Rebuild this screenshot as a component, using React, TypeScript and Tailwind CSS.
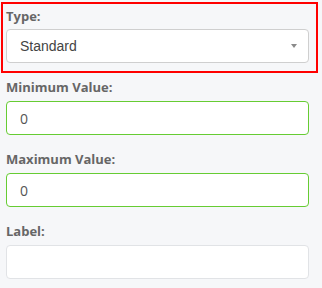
import React from "react";

function Label({ children }: { children: React.ReactNode }) {
  return (
    <div
      className="text-[13px] leading-[18px] font-bold text-[#666]"
      style={{ fontFamily: '"Open Sans", sans-serif' }}
    >
      {children}
    </div>
  );
}

export default function App() {
  return (
    <div className="w-[322px] h-[288px] bg-[#f6f7f9] pt-[2px] overflow-hidden">
      <div className="ml-[1px] w-[317px] border-2 border-[#ff0000] pl-[3px] pr-[7px] pt-[3px] pb-[8px]">
        <Label>Type:</Label>
        <div className="mt-[4px] h-[34px] w-[303px] rounded-[4px] border border-[#cfcfcf] bg-white flex items-center justify-between pl-[13px] pr-[11px]">
          <span
            className="text-[14px] text-[#444]"
            style={{ fontFamily: '"Liberation Sans", Arial, sans-serif' }}
          >
            Standard
          </span>
          <span className="w-0 h-0 border-l-[3px] border-r-[3px] border-t-[4px] border-l-transparent border-r-transparent border-t-[#8a8a8a]" />
        </div>
      </div>
      <div className="pl-[6px] w-[309px]">
        <div className="mt-[5px]">
          <Label>Minimum Value:</Label>
          <div className="mt-[5px] h-[34px] rounded-[4px] border border-[#66cc33] bg-white flex items-center pl-[13px]">
            <span
              className="text-[14px] text-[#555]"
              style={{ fontFamily: '"Open Sans", sans-serif' }}
            >
              0
            </span>
          </div>
        </div>
        <div className="mt-[15px]">
          <Label>Maximum Value:</Label>
          <div className="mt-[5px] h-[34px] rounded-[4px] border border-[#66cc33] bg-white flex items-center pl-[13px]">
            <span
              className="text-[14px] text-[#555]"
              style={{ fontFamily: '"Open Sans", sans-serif' }}
            >
              0
            </span>
          </div>
        </div>
        <div className="mt-[15px]">
          <Label>Label:</Label>
          <div className="mt-[5px] h-[34px] rounded-[4px] border border-[#e1e3e6] bg-white" />
        </div>
      </div>
    </div>
  );
}
